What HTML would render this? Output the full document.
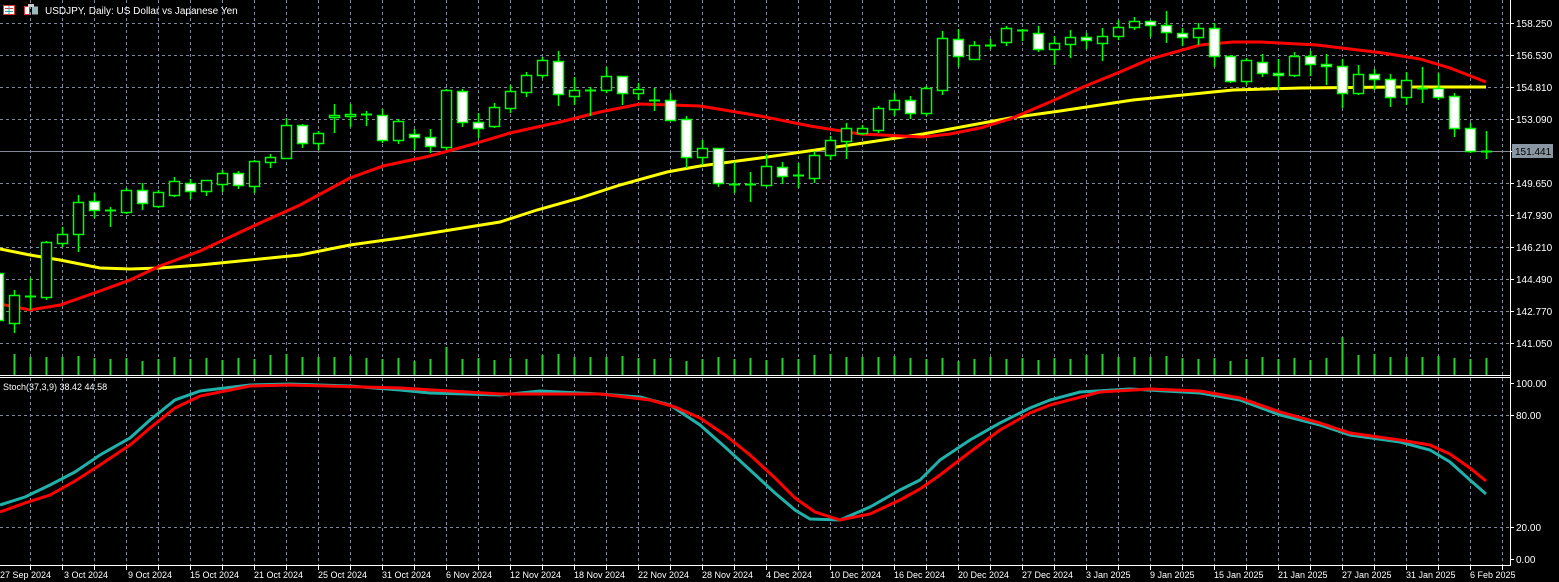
<!DOCTYPE html>
<html><head><meta charset="utf-8"><style>
html,body{margin:0;padding:0;background:#000;overflow:hidden;width:1559px;height:582px;}
svg{display:block;font-family:"Liberation Sans",sans-serif;}
</style></head><body>
<svg id="s" width="1559" height="582" xmlns="http://www.w3.org/2000/svg">
<rect width="1559" height="582" fill="#000"/>
<g id="grid" stroke="#7f8a96" stroke-width="1" stroke-dasharray="3,3"></g>
<line x1="0" y1="151.5" x2="1510" y2="151.5" stroke="#7f8a96"/>
<g id="vol" stroke="#32cd32" stroke-width="2"></g>
<polyline id="yl" fill="none" stroke="#ffff00" stroke-width="3"/>
<polyline id="rl" fill="none" stroke="#ff0000" stroke-width="3"/>
<g id="cnd"></g>
<polyline id="st1" fill="none" stroke="#20b2aa" stroke-width="3"/>
<polyline id="st2" fill="none" stroke="#ff0000" stroke-width="3"/>
<g stroke="#fff" stroke-width="1">
<line x1="1510.5" y1="0" x2="1510.5" y2="566"/>
<line x1="0" y1="375.5" x2="1511" y2="375.5"/>
<line x1="0" y1="377.5" x2="1511" y2="377.5"/>
<line x1="0" y1="565.5" x2="1511" y2="565.5"/>
</g>
<g id="ticks" stroke="#fff"></g>
<g fill="#fff" font-size="10">
<text x="1516" y="27">158.250</text><text x="1516" y="59">156.530</text><text x="1516" y="91">154.810</text>
<text x="1516" y="123">153.090</text><text x="1516" y="187">149.650</text><text x="1516" y="219">147.930</text>
<text x="1516" y="251">146.210</text><text x="1516" y="283">144.490</text><text x="1516" y="315">142.770</text>
<text x="1516" y="347">141.050</text>
<text x="1516" y="387">100.00</text><text x="1516" y="419">80.00</text><text x="1516" y="531">20.00</text><text x="1516" y="563">0.00</text>
</g>
<rect x="1512" y="144" width="41" height="14" fill="#8a96a2"/>
<text x="1515" y="155" fill="#000" font-size="10">151.441</text>
<g fill="#fff" font-size="9">
<text x="0" y="578">27 Sep 2024</text><text x="64" y="578">3 Oct 2024</text><text x="128" y="578">9 Oct 2024</text>
<text x="190" y="578">15 Oct 2024</text><text x="254" y="578">21 Oct 2024</text><text x="318" y="578">25 Oct 2024</text>
<text x="382" y="578">31 Oct 2024</text><text x="446" y="578">6 Nov 2024</text><text x="510" y="578">12 Nov 2024</text>
<text x="574" y="578">18 Nov 2024</text><text x="638" y="578">22 Nov 2024</text><text x="702" y="578">28 Nov 2024</text>
<text x="766" y="578">4 Dec 2024</text><text x="830" y="578">10 Dec 2024</text><text x="894" y="578">16 Dec 2024</text>
<text x="958" y="578">20 Dec 2024</text><text x="1022" y="578">27 Dec 2024</text><text x="1086" y="578">3 Jan 2025</text>
<text x="1150" y="578">9 Jan 2025</text><text x="1214" y="578">15 Jan 2025</text><text x="1278" y="578">21 Jan 2025</text>
<text x="1342" y="578">27 Jan 2025</text><text x="1406" y="578">31 Jan 2025</text><text x="1470" y="578">6 Feb 2025</text>
</g>
<text x="3" y="390" fill="#fff" font-size="9">Stoch(37,3,9) 38.42 44.58</text>
<g>
<rect x="3.5" y="5.5" width="11" height="9" fill="#fff" stroke="#d33" stroke-width="1"/>
<line x1="5" y1="8.5" x2="13" y2="8.5" stroke="#d33"/><line x1="5" y1="11.5" x2="13" y2="11.5" stroke="#3aa"/>
<line x1="9" y1="6" x2="9" y2="14" stroke="#3aa"/>
<rect x="24.5" y="6.5" width="5" height="8" fill="#fff" stroke="#d33"/>
<rect x="32" y="6.5" width="6" height="8" fill="#9bb"/>
<rect x="28" y="4" width="6" height="3" fill="#ccc"/>
</g>
<text x="45" y="14" fill="#fff" font-size="10">USDJPY, Daily:  US Dollar vs Japanese Yen</text>
</svg>
<script>
var NS="http://www.w3.org/2000/svg";
function el(p,t,a){var e=document.createElementNS(NS,t);for(var k in a)e.setAttribute(k,a[k]);document.getElementById(p).appendChild(e);return e;}
for(var x=30;x<1510;x+=32){el("grid","line",{x1:x+.5,y1:0,x2:x+.5,y2:375});el("grid","line",{x1:x+.5,y1:378,x2:x+.5,y2:565});el("ticks","line",{x1:x+.5,y1:566,x2:x+.5,y2:570});}
for(var y=23;y<=343;y+=32){el("grid","line",{x1:0,y1:y+.5,x2:1510,y2:y+.5});el("ticks","line",{x1:1510,y1:y+.5,x2:1514,y2:y+.5});}
[383,415,527,559].forEach(function(y){if(y==415||y==527)el("grid","line",{x1:0,y1:y+.5,x2:1510,y2:y+.5});el("ticks","line",{x1:1510,y1:y+.5,x2:1514,y2:y+.5});});
var C=[[-2,273,320,270,322,'w'],[14,295,323,290,333,'g'],[30,296,296,278,310,'d'],[46,242,297,241,300,'g'],[62,234,243,227,247,'g'],[78,202,234,195,252,'g'],[94,201,210,193,218,'w'],[110,210,210,207,227,'d'],[126,190,212,188,214,'g'],[142,190,203,183,210,'w'],[158,192,206,190,208,'g'],[174,181,195,177,197,'g'],[190,183,191,179,199,'w'],[206,180,191,180,196,'g'],[222,173,184,170,192,'g'],[238,173,185,171,189,'w'],[254,161,186,160,193,'g'],
[270,157,162,154,168,'g'],[286,125,158,118,159,'g'],[302,125,143,124,148,'w'],[318,133,143,131,150,'g'],[334,115,117,104,133,'g'],[350,114,116,104,127,'g'],[366,114,114,111,126,'d'],[382,115,140,109,143,'w'],[398,121,140,119,144,'g'],[414,134,137,129,150,'w'],[430,137,146,129,153,'w'],[446,90,147,89,150,'g'],[462,91,122,89,127,'w'],[478,122,128,113,138,'w'],[494,107,126,103,128,'g'],
[510,91,108,85,113,'g'],[526,75,92,72,97,'g'],[542,60,75,57,78,'g'],[558,61,94,51,106,'w'],[574,90,96,77,105,'g'],[590,90,90,87,116,'d'],[606,76,90,67,93,'g'],[622,76,93,76,105,'w'],[638,89,93,83,100,'g'],[654,100,100,88,111,'d'],[670,100,120,93,121,'w'],[686,119,157,116,168,'w'],[702,148,157,140,165,'g'],[718,148,183,148,187,'w'],[734,184,184,162,193,'d'],[750,184,184,172,202,'d'],
[766,166,185,154,187,'g'],[782,167,176,162,184,'w'],[798,175,175,163,188,'d'],[814,155,178,151,183,'g'],[830,140,155,136,160,'g'],[846,128,141,123,159,'g'],[862,128,133,125,135,'g'],[878,108,130,106,133,'g'],[894,100,109,93,116,'g'],[910,100,113,96,119,'w'],[926,88,113,86,116,'g'],[942,38,90,31,95,'g'],[958,39,56,29,67,'w'],[974,45,59,41,60,'g'],[990,45,45,39,49,'d'],
[1006,28,42,26,46,'g'],[1022,30,30,29,41,'d'],[1038,33,49,26,52,'w'],[1054,43,49,36,65,'g'],[1070,37,44,30,58,'g'],[1086,37,40,33,49,'w'],[1102,36,43,28,61,'g'],[1118,27,36,20,40,'g'],[1134,21,27,17,30,'g'],[1150,21,25,20,37,'w'],[1166,25,32,11,43,'w'],[1182,33,37,28,46,'w'],[1198,28,37,23,45,'g'],[1214,28,56,23,67,'w'],[1230,56,81,55,83,'w'],[1246,60,81,58,85,'g'],
[1262,62,73,54,77,'w'],[1278,73,75,59,90,'w'],[1294,56,75,52,77,'g'],[1310,56,64,51,76,'w'],[1326,64,66,54,85,'w'],[1342,66,93,59,108,'w'],[1358,74,93,65,95,'g'],[1374,74,79,69,90,'w'],[1390,79,97,74,107,'w'],[1406,80,97,72,105,'g'],[1422,88,88,67,103,'d'],[1438,88,97,73,100,'w'],[1454,96,128,93,137,'w'],[1470,128,151,123,153,'w'],[1486,151,151,131,159,'d']];
var G="#00ff00";
C.forEach(function(c,i){var x=c[0];
el("cnd","line",{x1:x+.5,y1:c[3],x2:x+.5,y2:c[4],stroke:G,"stroke-width":1.5});
if(c[5]=='d'){el("cnd","line",{x1:x-5,y1:c[1]+.5,x2:x+6,y2:c[1]+.5,stroke:G,"stroke-width":2});}
else el("cnd","rect",{x:x-4.5,y:c[1]+.5,width:10,height:Math.max(c[2]-c[1],2),fill:c[5]=='w'?"#fff":"#000",stroke:G,"stroke-width":1.5});
var h=[20,21,18,18,18,19,17,16,17,14,16,18,16,17,15,17,16][i%17];if(x==446)h=28;if(x==1342)h=38;
el("vol","line",{x1:x+.5,y1:375,x2:x+.5,y2:375-h});
});
function pl(id,a){document.getElementById(id).setAttribute("points",a.map(function(p){return p.join(",")}).join(" "));}
pl("rl",[[0,304],[30,310],[60,305],[100,291],[130,280],[160,266],[200,251],[260,223],[300,205],[350,178],[383,166],[430,156],[470,145],[510,133],[537,127],[560,122],[600,112],[640,104],[700,106],[760,116],[810,126],[860,134],[923,137],[950,134],[980,128],[1010,119],[1050,102],[1083,87],[1120,72],[1150,59],[1200,45],[1233,42],[1260,42],[1317,45],[1383,53],[1420,59],[1450,68],[1486,82]]);
pl("yl",[[0,249],[30,255],[60,260],[100,268],[130,269],[160,268],[200,265],[260,259],[300,255],[350,245],[400,238],[450,230],[500,222],[537,210],[580,198],[620,185],[667,172],[700,166],[760,158],[850,145],[923,134],[1010,118],[1060,111],[1133,100],[1233,90],[1300,88],[1400,87],[1486,87]]);
pl("st1",[[0,505],[25,497],[50,485],[75,472],[100,455],[130,438],[150,420],[175,400],[200,391],[250,385],[290,384],[350,386],[400,390],[430,393],[500,395],[540,391],[600,394],[640,397],[670,405],[700,425],[725,447],[750,470],[775,493],[795,510],[810,519],[840,520],[870,507],[900,490],[920,480],[940,460],[970,440],[1000,423],[1030,408],[1050,400],[1080,392],[1130,389],[1200,393],[1240,400],[1280,415],[1320,425],[1350,435],[1400,442],[1430,450],[1450,462],[1470,480],[1486,494]]);
pl("st2",[[0,512],[25,503],[50,495],[75,481],[100,465],[130,445],[150,428],[175,408],[200,396],[250,386],[290,385],[400,388],[500,394],[600,394],[650,400],[675,407],[700,418],[725,435],[750,455],[775,478],[795,498],[815,512],[840,520],[870,514],[900,500],[920,489],[940,475],[970,452],[1000,430],[1030,413],[1050,405],[1100,392],[1150,389],[1200,391],[1240,398],[1280,412],[1320,423],[1350,433],[1400,440],[1430,445],[1450,454],[1470,468],[1486,481]]);
</script>
</body></html>
